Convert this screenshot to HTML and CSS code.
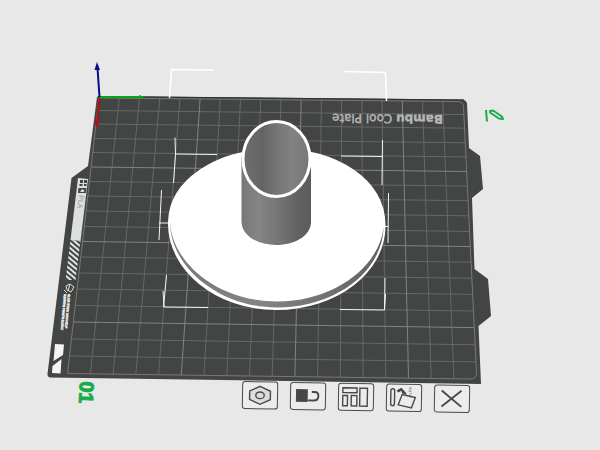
FILE: index.html
```html
<!DOCTYPE html>
<html lang="en">
<head>
<meta charset="utf-8">
<meta name="viewport" content="width=device-width, initial-scale=1">
<title>Plate 01</title>
<link rel="stylesheet" href="styles.css">
</head>
<body>
<main class="stage">
  <svg class="scene" viewBox="0 0 600 450" role="img" aria-label="Model on build plate">
    <defs>
      <linearGradient id="outer" x1="241" x2="311" y1="0" y2="0" gradientUnits="userSpaceOnUse">
        <stop offset="0" stop-color="#777"/><stop offset=".25" stop-color="#858585"/><stop offset=".55" stop-color="#747474"/><stop offset=".8" stop-color="#626262"/><stop offset="1" stop-color="#5c5c5c"/>
      </linearGradient>
      <linearGradient id="inner" x1="243" x2="309" y1="0" y2="0" gradientUnits="userSpaceOnUse">
        <stop offset="0" stop-color="#6f6f6f"/><stop offset=".3" stop-color="#646464"/><stop offset=".5" stop-color="#757575"/><stop offset=".75" stop-color="#828282"/><stop offset="1" stop-color="#777"/>
      </linearGradient>
      <linearGradient id="rim" x1="168" x2="385" y1="0" y2="0" gradientUnits="userSpaceOnUse">
        <stop offset="0" stop-color="#777"/><stop offset=".4" stop-color="#848484"/><stop offset="1" stop-color="#626262"/>
      </linearGradient>
      <pattern id="hatch" width="8" height="4" patternUnits="userSpaceOnUse" patternTransform="rotate(40)">
        <rect width="8" height="2" fill="#e2e3e3"/>
      </pattern>
    </defs>

    <path class="plate" d="M99 96 463 99.500Q466 100 467 103L469 148 480 156 483 189 472 198 474.500 269 488 279 491 316 478.500 326 481 384 50 377.500Q47 377 47.500 374L71.500 178 88 166 97 97Z"/>
    <path class="plate-edge" d="M98 96.500 464 100"/>
    <path class="grid-minor" id="minor"/>
    <path class="grid-major" id="major"/>
    <path class="grid-border" d="M102 98 458 101.500Q463 101.500 463.500 107L476.500 373Q476.500 379 470 379L67.500 373.500 99 98Z"/>

    <text class="plate-name" transform="translate(443 115) rotate(180.500)"><tspan class="brand">Bambu</tspan> Cool Plate</text>

    <path class="strip" d="M78 178 88 179 80.500 241 70.500 240Z"/>
    <path class="strip-ink" d="M80 180h3v3h-3zM84 180h3v3h-3zM79.500 184h3v2h-3zM84 184h2.500v2h-2.500zM78.500 188h8l-.5 5h-8z"/>
    <path class="strip" d="m80 192 2-3 3 2-2 1z"/>
    <text class="material" transform="translate(79 195) rotate(96)">PLA</text>
    <path d="M70.500 240 80.500 241 75.500 280 65.500 280Z" fill="url(#hatch)"/>
    <path class="ink-line" d="m66 286 4-2 4 3-3 5-4-2zM64 290l3 3M70 284l-2 7"/>
    <text class="notice" transform="translate(68 294) rotate(95)">GLUE STICK CAN HELP</text>
    <text class="notice" transform="translate(64 294) rotate(95)">REMOVE PRINTS EASILY</text>
    <path class="marks" d="M55 344 64 344.500 63 355 53.500 361ZM61.500 359 60.500 373.500 52 373 52.500 366Z"/>

    <g class="bounds">
      <path class="bounds-far" d="M169.500 98 171.500 69.500 214 70M344 71.500 385.500 72.500 386.500 101"/>
      <path d="M175 137.500 175.500 154 217 154.500M175.500 154 173.500 183M341 156 382 156.500M382.500 140 382 185"/>
      <path d="M161.500 190 159 240M159 223H168M388.500 193 388 243M384 226.500H388"/>
      <path d="M166.500 275 163.500 307 208 307.500M163 291 164 307M340 309.500 384.500 310 385 278M385.500 294 384.500 310"/>
    </g>

    <path class="outline" d="M169 222C170 180 217 149.500 277 149.500S384 180 384.500 225C385 272 336 309 276 309S168 269 169 222Z"/>
    <path fill="url(#rim)" d="M170 222C170 266 218 307.500 277 307.500S383 271 383.500 227C380 265 336 301.500 277 301.500S172 263 170 222Z"/>
    <path fill="url(#outer)" d="M241.500 157V222C242 236 258 245 276 245S311 236 311 222V157Z"/>
    <ellipse class="mouth" cx="276.500" cy="159" rx="33.500" ry="37.500" fill="url(#inner)"/>

    <path class="axis-y" d="M99 97H141"/><path class="tip-y" d="m139 95 6 2-6 2z"/>
    <path class="axis-x" d="M99.500 98 97 122"/><path class="tip-x" d="m94 120 6 1-3.500 7z"/>
    <path class="axis-z" d="M99.500 97 97.500 68"/><path class="tip-z" d="m94.500 70 5.500 0-3-8z"/>

    <path class="pencil" d="M486 110 487 121.500M490 111 493 110.500 502 116.500 503 119 499 118.500 490 112.500Z"/>
    <text class="number" transform="translate(80 381) rotate(93)">01</text>
  </svg>

  <nav class="tools" aria-label="Plate actions">
    <button class="tool" type="button" aria-label="Plate settings"><svg viewBox="0 0 36 27"><path class="soft" d="m18 4 11 5v9l-11 5-11-5V9z"/><ellipse cx="18" cy="13.500" rx="4.500" ry="3.500"/></svg></button>
    <button class="tool" type="button" aria-label="Lock plate"><svg viewBox="0 0 36 27"><path class="solid" d="M6 7h11v12H6z"/><path class="thick" d="M18 18h6q5 0 5-5 0-4-4-4h-3"/></svg></button>
    <button class="tool" type="button" aria-label="Arrange plate"><svg viewBox="0 0 36 27"><path d="M4 4h15v5H4zM4 12h5v11H4zM13 12h6v11h-6zM22 4h8v19h-8z"/></svg></button>
    <button class="tool" type="button" aria-label="Auto orient plate"><svg viewBox="0 0 36 27"><rect x="4" y="4" width="4" height="18" rx="2"/><path d="m16 10 14 3-4 11-14-3z"/><path class="solid flat" d="m10 6 5-3 5 5 1 2-5-1-1-3-3 2z"/><text class="auto" transform="translate(23 2) rotate(90)">AUTO</text></svg></button>
    <button class="tool" type="button" aria-label="Delete plate"><svg viewBox="0 0 36 27"><path class="thick" d="m7 5 21 17M28 5 7 22"/></svg></button>
  </nav>
</main>
<script src="grid.js"></script>
</body>
</html>
```
FILE: styles.css
```css
body { margin: 0; background: #e8e8e8; font-family: "Liberation Sans", Arial, sans-serif; }
.stage { position: relative; width: 100%; aspect-ratio: 4 / 3; overflow: hidden; background: #e8e8e8; }
.scene { display: block; width: 100%; height: 100%; fill: none; }
.plate { fill: #434545; }
.plate-edge { stroke: #303232; stroke-width: 1; }
.grid-minor { stroke: #666868; stroke-width: 1; }
.grid-major { stroke: #828484; stroke-width: 1; }
.grid-border { stroke: #777979; stroke-width: 1; }
.plate-name { fill: #b5b7b7; stroke: #b5b7b7; stroke-width: 0.4; font: 12px "DejaVu Sans", sans-serif; }
.brand { font-weight: bold; }
.strip { fill: #dcdedf; }
.strip-ink { fill: #434545; }
.material { fill: #9b9d9e; font-size: 7px; }
.ink-line { stroke: #dcdedf; stroke-width: 1; }
.notice { fill: #e8e9e9; stroke: #e8e9e9; stroke-width: 0.5; font-size: 3px; font-weight: bold; }
.marks { fill: #f5f5f5; }
.bounds { stroke: #f4f4f4; stroke-width: 1; }
.bounds-far { stroke: #fff; stroke-width: 1.5; }
.outline { fill: #fff; stroke: #fff; stroke-width: 2; }
.mouth { stroke: #fff; stroke-width: 3; }
.axis-x { stroke: #b40c12; stroke-width: 2; }
.tip-x { fill: #b40c12; }
.axis-y { stroke: #08a514; stroke-width: 2; }
.tip-y { fill: #08a514; }
.axis-z { stroke: #0c0c8c; stroke-width: 2; }
.tip-z { fill: #0c0c8c; }
.pencil { stroke: #16ac49; stroke-width: 2; stroke-linejoin: round; }
.number { fill: #16ac49; stroke: #16ac49; stroke-width: 1; font-size: 20px; font-weight: bold; }
.tools { position: absolute; left: 40.3%; top: 85.2%; display: flex; gap: 12px; transform: rotate(1deg); }
.tool { box-sizing: border-box; width: 36px; height: 28px; padding: 0; border: 1px solid #484a4a; border-radius: 3px; background: #ececec; cursor: pointer; }
.tool svg { display: block; width: 100%; height: 100%; fill: none; stroke: #484a4a; stroke-width: 1.5; }
.tool .soft { fill: #dcdcdc; }
.tool .solid { fill: #444646; }
.tool .flat { stroke: none; }
.tool .thick { stroke-width: 2; }
.tool .auto { fill: #555; stroke: none; font-size: 4px; }
```
FILE: grid.js
```js
// Eighteen 10 mm cells each way, drawn in perspective; every fifth line is brighter.
const left = [98, 110.5, 124, 138.5, 152.5, 167, 181.5, 196, 211, 226.5, 241.5, 257, 273, 289, 305.5, 322, 339, 356];
const paths = { minor: "", major: "" };
for (let i = 1; i < 18; i++) {
  const kind = i % 5 ? "minor" : "major";
  const y = left[i];
  const t = (y - 98) / 275;
  paths[kind] += `M${99 + 20.22 * i} ${98 + 0.19 * i}L${67.7 + 22.72 * i} ${373.3 + 0.32 * i}`;
  paths[kind] += `M${99 - 31.3 * t} ${y}L${463.3 + 13.4 * t} ${y + 4 + 2 * t}`;
}
for (const kind in paths) document.getElementById(kind).setAttribute("d", paths[kind]);
```
